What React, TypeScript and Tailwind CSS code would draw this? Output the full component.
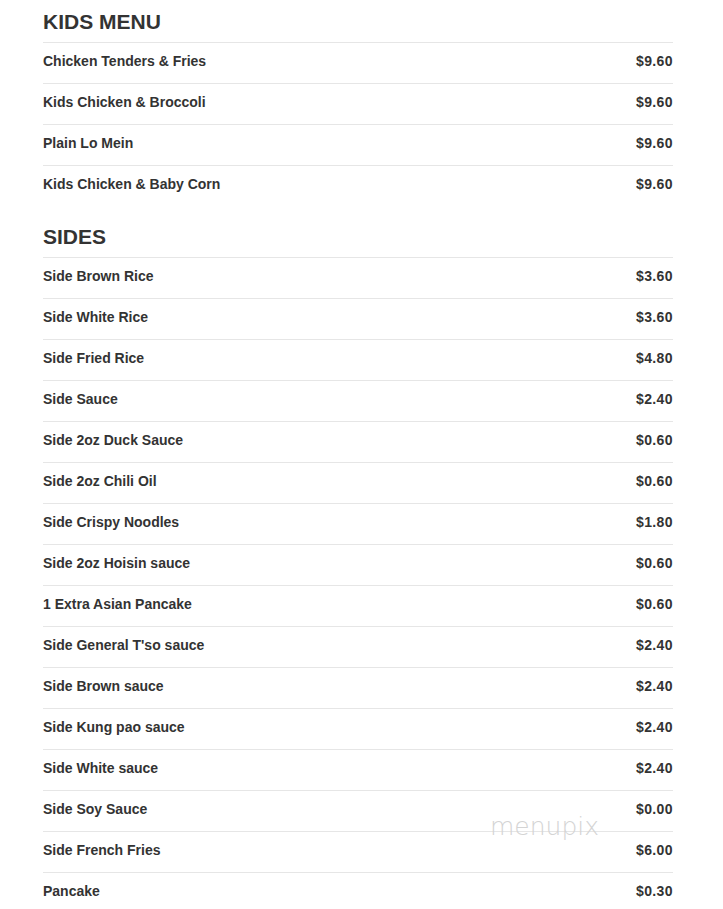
const kids: [string, string][] = [
  ["Chicken Tenders & Fries", "$9.60"],
  ["Kids Chicken & Broccoli", "$9.60"],
  ["Plain Lo Mein", "$9.60"],
  ["Kids Chicken & Baby Corn", "$9.60"],
];

const sides: [string, string][] = [
  ["Side Brown Rice", "$3.60"],
  ["Side White Rice", "$3.60"],
  ["Side Fried Rice", "$4.80"],
  ["Side Sauce", "$2.40"],
  ["Side 2oz Duck Sauce", "$0.60"],
  ["Side 2oz Chili Oil", "$0.60"],
  ["Side Crispy Noodles", "$1.80"],
  ["Side 2oz Hoisin sauce", "$0.60"],
  ["1 Extra Asian Pancake", "$0.60"],
  ["Side General T'so sauce", "$2.40"],
  ["Side Brown sauce", "$2.40"],
  ["Side Kung pao sauce", "$2.40"],
  ["Side White sauce", "$2.40"],
  ["Side Soy Sauce", "$0.00"],
  ["Side French Fries", "$6.00"],
  ["Pancake", "$0.30"],
];

function Section({ title, items, className = "" }: { title: string; items: [string, string][]; className?: string }) {
  return (
    <section className={className}>
      <h2 className="pt-[10px] pb-[8px] text-[21px] leading-[24px] font-bold text-[#333]">{title}</h2>
      {items.map(([name, price]) => (
        <div
          key={name}
          className="flex items-center justify-between h-[41px] pb-[4px] border-t border-[#e6e6e6] text-[14px] font-bold text-[#333]"
        >
          <span>{name}</span>
          <span className="tracking-[0.4px]">{price}</span>
        </div>
      ))}
    </section>
  );
}

export default function App() {
  return (
    <main
      className="relative bg-white min-h-[909px] overflow-hidden"
      style={{ fontFamily: '"Liberation Sans", Arial, sans-serif' }}
    >
      <div className="ml-[43px] w-[630px]">
        <Section title="KIDS MENU" items={kids} />
        <Section title="SIDES" items={sides} className="mt-[9px]" />
      </div>
      {/* watermark */}
      <div
        className="absolute left-[490px] top-[808px] text-[25px] text-[#d4d4d4] pointer-events-none"
        style={{ fontFamily: '"DejaVu Sans", sans-serif', fontWeight: 200 }}
      >
        menupix
      </div>
    </main>
  );
}
